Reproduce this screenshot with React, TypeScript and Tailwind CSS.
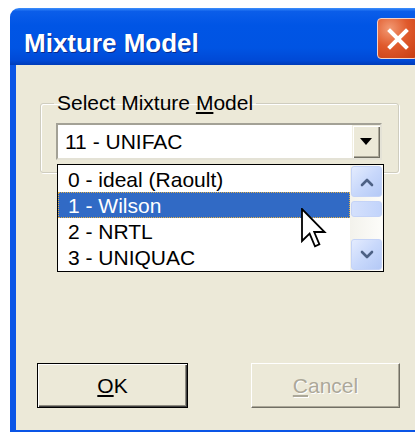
import React from "react";

const items = ["0 - ideal (Raoult)", "1 - Wilson", "2 - NRTL", "3 - UNIQUAC"];

function Chevron({ up }: { up: boolean }) {
  return (
    <svg width="14" height="10" viewBox="0 0 14 10">
      <path
        d={up ? "M2 8 L7 3 L12 8" : "M2 2 L7 7 L12 2"}
        fill="none"
        stroke="#4d6185"
        strokeWidth="2.6"
        strokeLinecap="round"
        strokeLinejoin="round"
      />
    </svg>
  );
}

function ScrollButton({ up }: { up: boolean }) {
  return (
    <div className="h-[31px] mx-[1px] rounded-[3px] border border-[#c4d3f7] bg-[linear-gradient(135deg,#e4ecfe_0%,#c8d8fb_50%,#b4c9f6_100%)] flex items-center justify-center">
      <Chevron up={up} />
    </div>
  );
}

export default function App() {
  return (
    <div className="w-[415px] h-[432px] overflow-hidden bg-white pt-[8px] pl-[10px] font-['Liberation_Sans',Arial,sans-serif]">
      <div className="w-[420px] h-[424px] flex flex-col">
        {/* caption bar */}
        <div className="h-[57px] shrink-0 rounded-tl-[9px] flex items-start pl-[14px] bg-[linear-gradient(to_bottom,#3d8ffc_0%,#0b5de9_6%,#0055e5_30%,#0054e3_70%,#0049d6_92%,#003cb8_100%)]">
          <span className="mt-[20px] text-[26px] leading-[30px] font-bold text-white [text-shadow:1px_1px_0_#0a2a8a]">
            Mixture Model
          </span>
          <div className="ml-auto mr-[12px] mt-[10px] w-[41px] h-[41px] rounded-[4px] border border-[#f4d0c4] bg-[radial-gradient(circle_at_30%_25%,#f29a74_0%,#e05a2c_45%,#c63b12_100%)] flex items-center justify-center">
            <svg width="24" height="24" viewBox="0 0 24 24">
              <path d="M4 4 L20 20 M20 4 L4 20" stroke="#fff" strokeWidth="4" strokeLinecap="square" />
            </svg>
          </div>
        </div>

        {/* client area */}
        <div className="relative flex-1 flex flex-col bg-[#ece9d8] border-l-[6px] border-b-[2px] border-[#0a55e6] text-black">
          <fieldset className="mt-[26px] ml-[24px] w-[359px] h-[82px] border border-[#cfcdbf] rounded-[3px] shadow-[inset_1px_1px_0_#ffffff,1px_1px_0_#ffffff] p-0">
            <legend className="ml-[13px] px-[3px] text-[21px] leading-[24px]">
              Select Mixture <span className="underline underline-offset-2">M</span>odel
            </legend>
            <div className="mt-[8px] ml-[15px] w-[326px] h-[37px] flex bg-white border-2 border-t-[#a3a196] border-l-[#a3a196] border-r-[#e4e2d6] border-b-[#e4e2d6]">
              <span className="flex-1 pl-[7px] text-[21px] leading-[33px]">11 - UNIFAC</span>
              <div className="w-[28px] h-[33px] flex items-center justify-center bg-[#ece9d8] shadow-[inset_1px_1px_0_#f1efe2,inset_2px_2px_0_#ffffff,inset_-1px_-1px_0_#716f64,inset_-2px_-2px_0_#aca899]">
                <svg width="12" height="7" viewBox="0 0 12 7">
                  <path d="M0 0 H12 L6 7 Z" fill="#000" />
                </svg>
              </div>
            </div>
          </fieldset>

          {/* dropped-down list */}
          <div className="absolute left-[41px] top-[99px] w-[327px] h-[108px] border border-black bg-white flex">
            <div className="flex-1 flex flex-col pt-[1px]">
              {items.map((t, i) => (
                <div
                  key={t}
                  className={
                    i === 1
                      ? "h-[26px] pl-[9px] text-[21px] leading-[24px] pt-[1px] bg-[#316ac5] text-white border border-dotted border-[#e2b04a]"
                      : "h-[26px] pl-[10px] text-[21px] leading-[26px] pt-[1px]"
                  }
                >
                  {t}
                </div>
              ))}
            </div>
            <div className="w-[33px] flex flex-col pt-[1px] pb-[1px] bg-[linear-gradient(to_right,#f3f2ec,#fdfdfa)]">
              <ScrollButton up />
              <div className="mt-[4px] h-[16px] mx-[1px] rounded-[3px] border border-[#c4d3f7] bg-[linear-gradient(to_right,#d4e0fc,#c2d4fb)]" />
              <div className="flex-1" />
              <ScrollButton up={false} />
            </div>
          </div>

          {/* mouse pointer */}
          <svg className="absolute left-[285px] top-[143px]" width="26" height="44" viewBox="0 0 13 22">
            <path
              d="M0.5 0.5 L0.5 16.5 L4.3 12.8 L7 19.2 L9.2 18.2 L6.6 12 L11.8 12 Z"
              fill="#fff"
              stroke="#000"
              strokeWidth="0.9"
              strokeLinejoin="miter"
            />
          </svg>

          <div className="mt-auto mb-[22px] pl-[21px] flex gap-[63px]">
            <div className="w-[151px] h-[45px] flex items-center justify-center border border-black bg-[#ece9d8] shadow-[inset_1px_1px_0_#ffffff,inset_-1px_-1px_0_#404040,inset_-2px_-2px_0_#8f8c80] text-[21px]">
              <span>
                <span className="underline underline-offset-2">O</span>K
              </span>
            </div>
            <div className="w-[149px] h-[45px] flex items-center justify-center bg-[#ece9d8] border border-t-white border-l-white border-r-[#716f64] border-b-[#716f64] shadow-[inset_-1px_-1px_0_#aca899] text-[21px] text-[#aca899] [text-shadow:1px_1px_0_#ffffff]">
              <span>
                <span className="underline underline-offset-2">C</span>ancel
              </span>
            </div>
          </div>
        </div>
      </div>
    </div>
  );
}
